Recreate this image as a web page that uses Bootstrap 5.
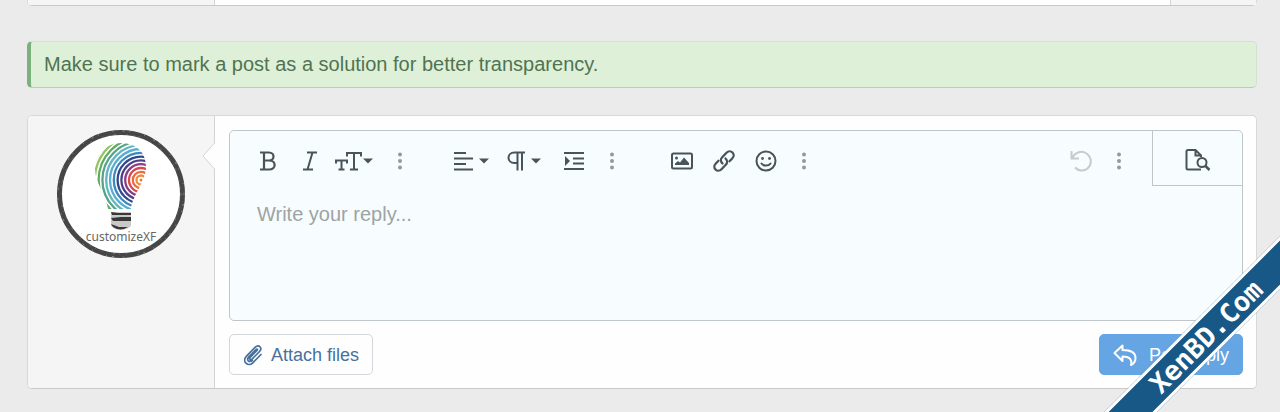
<!DOCTYPE html>
<html lang="en">
<head>
<meta charset="utf-8">
<meta name="viewport" content="width=device-width, initial-scale=1">
<title>Reply</title>
<link href="https://cdn.jsdelivr.net/npm/bootstrap@5.3.0/dist/css/bootstrap.min.css" rel="stylesheet">
<style>
body { background: #ebebeb; font-family: "Liberation Sans", Arial, sans-serif; }
.page-wrap { padding: 0 23px 0 27px; }
.panel { background: #fefefe; border: 1px solid #d8d8d8; border-bottom-color: #c9c9c9; border-radius: 5px; }
.prev-post { height: 6px; border-top: 0; border-radius: 0 0 5px 5px; }
.user-cell { width: 187px; background: #f5f5f5; border-right: 1px solid #d4d4d4; border-radius: 5px 0 0 5px; }
.side-cell { width: 86px; background: #f5f5f5; border-left: 1px solid #d4d4d4; }
.notice { margin: 35px 0 27px; padding: 8px 13px; border: 1px solid #d2e2ce; border-bottom-color: #bccbb8; border-left: 4px solid #7cb07c; border-radius: 5px; background: #dff0d8; color: #507451; font-size: 20px; line-height: 29px; }
.user-cell.with-avatar { padding-top: 13px; }
.speech { width: 13px; height: 26px; top: 27px; right: -1px; }
.reply-area { padding: 14px 13px 13px 14px; }
.editor { background: #f7fcfe; border: 1px solid #c0c7ca; border-radius: 5px; }
.tools { height: 55px; padding-left: 17px; color: #49545a; }
.tool-row { padding-top: 10px; }
.tool-group { margin-right: 32px; }
.tool { width: 42px; height: 40px; padding: 0; border: 0; background: none; color: inherit; display: flex; align-items: center; justify-content: center; }
.tool.drop { width: 52px; justify-content: flex-start; padding-left: 4px; }
.tool.more { width: 34px; color: #95999d; }
.tool.faded { color: #c5cbce; }
.tool.preview { width: 90px; height: 55px; padding-top: 4px; border-left: 1px solid #c0c7ca; border-bottom: 1px solid #c0c7ca; }
.reply-box, .reply-box:focus { border: 0; background: none; box-shadow: none; resize: none; font-size: 20px; line-height: 28px; height: 134px; padding: 14px 27px; }
.reply-box::placeholder { color: #9ea3a5; }
.actions { margin-top: 13px; }
.action { height: 41px; width: 144px; font-size: 18px; line-height: 24px; border-radius: 5px; padding: 0; display: flex; align-items: center; justify-content: center; gap: 8px; }
.action.attach { background: #fefefe; border: 1px solid #d3d6da; color: #47719c; }
.action.post { background: #65a5e3; border: 1px solid #65a5e3; color: #fff; gap: 12px; }
.ribbon { width: 360px; height: 37px; right: -106px; bottom: 57px; transform: rotate(-45deg); background: #185886; border: 3px solid #fff; color: #fff; font: bold 27px/31px "DejaVu Sans Mono", monospace; text-align: center; }
</style>
</head>
<body>
<div class="position-relative overflow-hidden min-vh-100">
  <main class="page-wrap">
    <div class="panel prev-post d-flex">
      <div class="user-cell"></div><div class="flex-grow-1"></div><div class="side-cell"></div>
    </div>
    <div class="notice" role="note">Make sure to mark a post as a solution for better transparency.</div>

    <form class="panel d-flex">
      <div class="user-cell with-avatar flex-shrink-0 position-relative text-center">
        <svg width="130" height="130" viewBox="0 0 130 130" role="img" aria-label="customizeXF">
          <defs>
            <clipPath id="bulb"><path d="M65 14C50 14 39 26 39 40C39 54 50 65 52 80H75C76 67 90 52 90 38C90 23 80 14 65 14Z"/></clipPath>
          </defs>
          <circle cx="65" cy="65" r="61.500" fill="#fff" stroke="#464646" stroke-width="5"/>
          <circle cx="65" cy="65" r="63" fill="none" stroke="#999" stroke-width="1" stroke-dasharray="1 9 2 5 1 14"/>
          <circle cx="65" cy="65" r="60" fill="none" stroke="#777" stroke-width="1" stroke-dasharray="2 11 1 6 1 4"/>
          <g clip-path="url(#bulb)" fill="none" stroke-width="2.300">
            <circle cx="85" cy="51" r="1.500" fill="#f07a35"/>
            <circle cx="85" cy="51" r="4.500" stroke="#ef8a38"/>
            <circle cx="85" cy="51" r="8.200" stroke="#ea6b3c"/>
            <circle cx="85" cy="51" r="12" stroke="#d8484c"/>
            <circle cx="85" cy="51" r="15.800" stroke="#8b3d83"/>
            <circle cx="85" cy="51" r="19.600" stroke="#4b3e8c"/>
            <circle cx="85" cy="51" r="23.400" stroke="#30488c"/>
            <circle cx="85" cy="51" r="27.200" stroke="#3f88bd"/>
            <circle cx="85" cy="51" r="31" stroke="#5aaed2"/>
            <circle cx="85" cy="51" r="34.800" stroke="#62b6be"/>
            <circle cx="85" cy="51" r="38.600" stroke="#55a38a"/>
            <circle cx="85" cy="51" r="42.400" stroke="#5eac5e"/>
            <circle cx="85" cy="51" r="46.200" stroke="#8fc563"/>
            <circle cx="85" cy="51" r="50" stroke="#d5dc56"/>
            <circle cx="85" cy="51" r="53.800" stroke="#e6dd4e"/>
          </g>
          <path d="M55 83H75V97C70 102 60 102 55 97Z" fill="#c9c9c9"/>
          <path d="M55 83L62 84H75V86H56ZM55 89L65 88H75V92H57ZM55 95L63 98H72Q64 103 57 98Z" fill="#393939"/>
          <text x="65" y="112" text-anchor="middle" font-family="Noto Sans, sans-serif" font-size="12" fill="#666">customizeXF</text>
        </svg>
        <svg class="speech position-absolute" viewBox="0 0 13 26" aria-hidden="true"><path d="M13 0L1 13L13 26Z" fill="#fefefe"/><path d="M12.500 0L1 13L12.500 26" fill="none" stroke="#d4d4d4"/></svg>
      </div>

      <div class="flex-grow-1 reply-area">
        <div class="editor">
          <div class="tools d-flex align-items-start justify-content-between">
            <div class="d-flex tool-row">
              <div class="tool-group d-flex">
                <button type="button" class="tool" aria-label="Bold"><svg width="18" height="22" viewBox="0 0 18 22" fill="none" stroke="currentColor" stroke-width="2.200"><path d="M1 2.500H10C16 2.500 16 10.500 10 10.500H5M10 10.500C17.500 10.500 17.500 19.500 10 19.500H1M5 2.500V19.500"/></svg></button>
                <button type="button" class="tool" aria-label="Italic"><svg width="18" height="22" viewBox="0 0 18 22" fill="none" stroke="currentColor" stroke-width="2"><path d="M6 2.500H16M2 19.500H12M11.500 2.500L6.500 19.500"/></svg></button>
                <button type="button" class="tool drop" aria-label="Font size"><svg width="40" height="22" viewBox="0 0 40 22" fill="none" stroke="currentColor" stroke-width="2"><path d="M1 13.500V10.500H12V13.500M6.500 10.500V19.500M3.500 19.500H9.500M12 6.500V3H26V6.500M19 3V19.500M15 19.500H23"/><path d="M28 8.500H38L33 13.500Z" fill="currentColor" stroke="none"/></svg></button>
                <button type="button" class="tool more" aria-label="More text options"><svg width="6" height="20" viewBox="0 0 6 20" fill="currentColor"><circle cx="3" cy="3.500" r="2"/><circle cx="3" cy="10" r="2"/><circle cx="3" cy="16.500" r="2"/></svg></button>
              </div>
              <div class="tool-group d-flex">
                <button type="button" class="tool drop" aria-label="Alignment"><svg width="40" height="22" viewBox="0 0 40 22" fill="none" stroke="currentColor" stroke-width="2"><path d="M1 3H13M1 8.500H20M1 14H13M1 19.500H20"/><path d="M26 8.500H36L31 13.500Z" fill="currentColor" stroke="none"/></svg></button>
                <button type="button" class="tool drop" aria-label="Paragraph format"><svg width="40" height="22" viewBox="0 0 40 22" fill="none" stroke="currentColor" stroke-width="2"><path d="M20 2.500H9.500C1.500 2.500 1.500 13 9.500 13H12M12.500 2.500V20.500M17 2.500V20.500"/><path d="M26 8.500H36L31 13.500Z" fill="currentColor" stroke="none"/></svg></button>
                <button type="button" class="tool" aria-label="Indent"><svg width="20" height="22" viewBox="0 0 20 22" fill="none" stroke="currentColor" stroke-width="2"><path d="M0 3H20M9 8.500H20M9 13.500H20M0 19H20"/><path d="M1 6V16L6 11Z" fill="currentColor" stroke="none"/></svg></button>
                <button type="button" class="tool more" aria-label="More paragraph options"><svg width="6" height="20" viewBox="0 0 6 20" fill="currentColor"><circle cx="3" cy="3.500" r="2"/><circle cx="3" cy="10" r="2"/><circle cx="3" cy="16.500" r="2"/></svg></button>
              </div>
              <div class="tool-group d-flex">
                <button type="button" class="tool" aria-label="Insert image"><svg width="22" height="20" viewBox="0 0 22 20" fill="none" stroke="currentColor" stroke-width="2"><rect x="1" y="2.500" width="20" height="15" rx="1.500"/><circle cx="5.500" cy="7" r="1.500" fill="currentColor" stroke="none"/><path d="M4 14V12.500L7 10L9 11.500L13 6.500L18 12V14Z" fill="currentColor" stroke="none"/></svg></button>
                <button type="button" class="tool" aria-label="Insert link"><svg width="24" height="24" viewBox="0 0 24 24" fill="none" stroke="currentColor" stroke-width="2.300" stroke-linecap="round"><path d="M10.500 14.500C8.500 12.500 8.500 10 10 8.500L14.500 3.800C16.500 1.800 19 2 20.500 3.500C22 5 22.200 7.500 20.200 9.500L17.500 12.200"/><path d="M13.500 9.500C15.500 11.500 15.500 14 14 15.500L9.500 20.200C7.500 22.200 5 22 3.500 20.500C2 19 1.800 16.500 3.800 14.500L6.500 11.800"/></svg></button>
                <button type="button" class="tool" aria-label="Smilies"><svg width="22" height="22" viewBox="0 0 22 22" fill="none" stroke="currentColor" stroke-width="2"><circle cx="11" cy="11" r="9.500"/><path d="M6.500 13.500C8.500 16.300 13.500 16.300 15.500 13.500" stroke-linecap="round"/><circle cx="7.500" cy="8.500" r="1.400" fill="currentColor" stroke="none"/><circle cx="14.500" cy="8.500" r="1.400" fill="currentColor" stroke="none"/></svg></button>
                <button type="button" class="tool more" aria-label="More rich options"><svg width="6" height="20" viewBox="0 0 6 20" fill="currentColor"><circle cx="3" cy="3.500" r="2"/><circle cx="3" cy="10" r="2"/><circle cx="3" cy="16.500" r="2"/></svg></button>
              </div>
            </div>
            <div class="d-flex align-items-start">
              <div class="d-flex tool-row me-3">
                <button type="button" class="tool faded" aria-label="Undo"><svg width="22" height="22" viewBox="0 0 22 22" fill="none" stroke="currentColor" stroke-width="2"><path d="M1.500 1V8.500H9M2 8C5 2.500 11 0 16.500 3.500C22 7.500 22 14.500 17.500 18.500C14 21.500 8 21 5 17.500"/></svg></button>
                <button type="button" class="tool more" aria-label="More options"><svg width="6" height="20" viewBox="0 0 6 20" fill="currentColor"><circle cx="3" cy="3.500" r="2"/><circle cx="3" cy="10" r="2"/><circle cx="3" cy="16.500" r="2"/></svg></button>
              </div>
              <button type="button" class="tool preview" aria-label="Preview"><svg width="26" height="24" viewBox="0 0 26 24" fill="none" stroke="currentColor" stroke-width="2"><path d="M16 21.500H3Q1.500 21.500 1.500 20V3.500Q1.500 2 3 2H10.500L16 7.500V9M10.500 2V7.500H16"/><circle cx="17" cy="14.500" r="4.500"/><path d="M20 17.500L24.500 22" stroke-width="2.500"/></svg></button>
            </div>
          </div>
          <textarea class="form-control reply-box" placeholder="Write your reply..." aria-label="Reply"></textarea>
        </div>
        <div class="d-flex justify-content-between actions">
          <button type="button" class="btn action attach"><svg width="20" height="22" viewBox="0 0 20 22" fill="none" stroke="currentColor" stroke-width="1.700" stroke-linecap="round" stroke-linejoin="round"><path d="M13.500 6.800L7.200 13.300C5.800 14.800 7.600 16.600 9 15.200L16.500 7.500C19.800 4 15.800-.200 12.300 3.200L3.500 12.200C-1.500 17.400 5 23.500 9.800 18.800L18 10.500M14 6.500C15 5.300 14 4.500 13 5.500L5.800 12.800C3 15.800 6.300 19.300 9.300 16.300"/></svg>Attach files</button>
          <button type="submit" class="btn action post"><svg width="24" height="22" viewBox="0 0 24 22" fill="none" stroke="currentColor" stroke-width="2" stroke-linejoin="round"><path d="M1.500 9L9.500 1.500V6C18 6 22.500 9 22.500 14C22.500 17 21 19.500 18 21C19.500 15 16 12.500 9.500 12.500V17Z"/></svg>Post reply</button>
        </div>
      </div>
    </form>
  </main>
  <div class="ribbon position-absolute">XenBD.Com</div>
</div>
<script src="https://cdn.jsdelivr.net/npm/bootstrap@5.3.0/dist/js/bootstrap.bundle.min.js"></script>
</body>
</html>
